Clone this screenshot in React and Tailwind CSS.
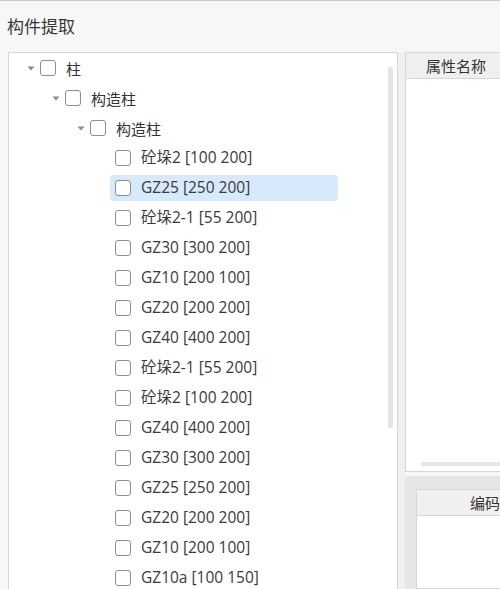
import React from "react";

const FONT = { fontFamily: '"Noto Sans CJK SC", "Noto Sans", sans-serif' };
const TREE_FONT = { fontFamily: '"Open Sans", "Noto Sans CJK SC", sans-serif' };

const leaves = [
  "砼垛2 [100 200]",
  "GZ25 [250 200]",
  "砼垛2-1 [55 200]",
  "GZ30 [300 200]",
  "GZ10 [200 100]",
  "GZ20 [200 200]",
  "GZ40 [400 200]",
  "砼垛2-1 [55 200]",
  "砼垛2 [100 200]",
  "GZ40 [400 200]",
  "GZ30 [300 200]",
  "GZ25 [250 200]",
  "GZ20 [200 200]",
  "GZ10 [200 100]",
  "GZ10a [100 150]",
];

function Checkbox() {
  return (
    <span className="w-[16px] h-[16px] shrink-0 rounded-[3px] border border-[#8e8e8e] bg-white" />
  );
}

function Arrow() {
  return (
    <span className="w-[13px] h-[16px] shrink-0 flex items-center">
      <svg width="8" height="5" viewBox="0 0 8 5">
        <path d="M0.5 0.5 L7.5 0.5 L4 4.5 Z" fill="#8a8a8a" />
      </svg>
    </span>
  );
}

function Branch({ pl, label }) {
  return (
    <div className="h-[30px] shrink-0 flex items-center" style={{ paddingLeft: pl }}>
      <Arrow />
      <Checkbox />
      <span className="ml-[10px] text-[15px] text-[#333] leading-none" style={FONT}>
        {label}
      </span>
    </div>
  );
}

function Leaf({ label, selected }) {
  return (
    <div className="h-[30px] shrink-0 flex items-center pl-[101px]">
      <div
        className={
          "h-[26px] w-[228px] flex items-center pl-[5px] rounded-[4px] " +
          (selected ? "bg-[#d9e9fc]" : "")
        }
      >
        <Checkbox />
        <span
          className="ml-[10px] text-[15.5px] text-[#3a3a3a] leading-none whitespace-nowrap"
          style={TREE_FONT}
        >
          {label}
        </span>
      </div>
    </div>
  );
}

export default function App() {
  return (
    <div
      className="w-[500px] h-[589px] overflow-hidden bg-[#f7f7f7] border-t border-[#c8c8c8] flex flex-col"
      style={FONT}
    >
      <div className="h-[51px] shrink-0 flex items-center pl-[7px] pb-[3px]">
        <span className="text-[17px] text-[#383838] leading-none">构件提取</span>
      </div>
      <div className="flex flex-1 min-h-0">
        <div className="ml-[8px] w-[390px] shrink-0 bg-white border-l border-t border-r border-[#d6d6d6] flex overflow-hidden">
          <div className="flex-1 flex flex-col">
            <Branch pl={18} label="柱" />
            <Branch pl={43} label="构造柱" />
            <Branch pl={68} label="构造柱" />
            {leaves.map((l, i) => (
              <Leaf key={i} label={l} selected={i === 1} />
            ))}
          </div>
          <div className="w-[5px] shrink-0 mr-[4px] mt-[14px] h-[361px] rounded-full bg-[#e4e4e4]" />
        </div>
        <div className="w-[7px] shrink-0 bg-[#f0f0f0]" />
        <div className="flex-1 flex flex-col min-w-0">
          <div className="h-[420px] shrink-0 w-[120px] bg-white border border-[#d6d6d6] flex flex-col">
            <div className="h-[26px] shrink-0 bg-[#efefef] border-b border-[#d6d6d6] flex items-center pl-[20px]">
              <span className="text-[15px] text-[#333] leading-none whitespace-nowrap">属性名称</span>
            </div>
            <div className="flex-1 flex flex-col justify-end pb-[5px] pl-[15px]">
              <div className="h-[4px] rounded-full bg-[#e6e6e6]" />
            </div>
          </div>
          <div className="h-[4px] shrink-0" />
          <div className="flex-1 bg-[#e6e6e6] pt-[13px] pl-[11px]">
            <div className="w-[120px] h-full bg-white border border-[#d6d6d6] flex flex-col">
              <div className="h-[26px] shrink-0 bg-[#f0f0f0] border-b border-[#d6d6d6] flex items-center pl-[53px]">
                <span className="text-[15px] text-[#333] leading-none whitespace-nowrap">编码</span>
              </div>
            </div>
          </div>
        </div>
      </div>
    </div>
  );
}
